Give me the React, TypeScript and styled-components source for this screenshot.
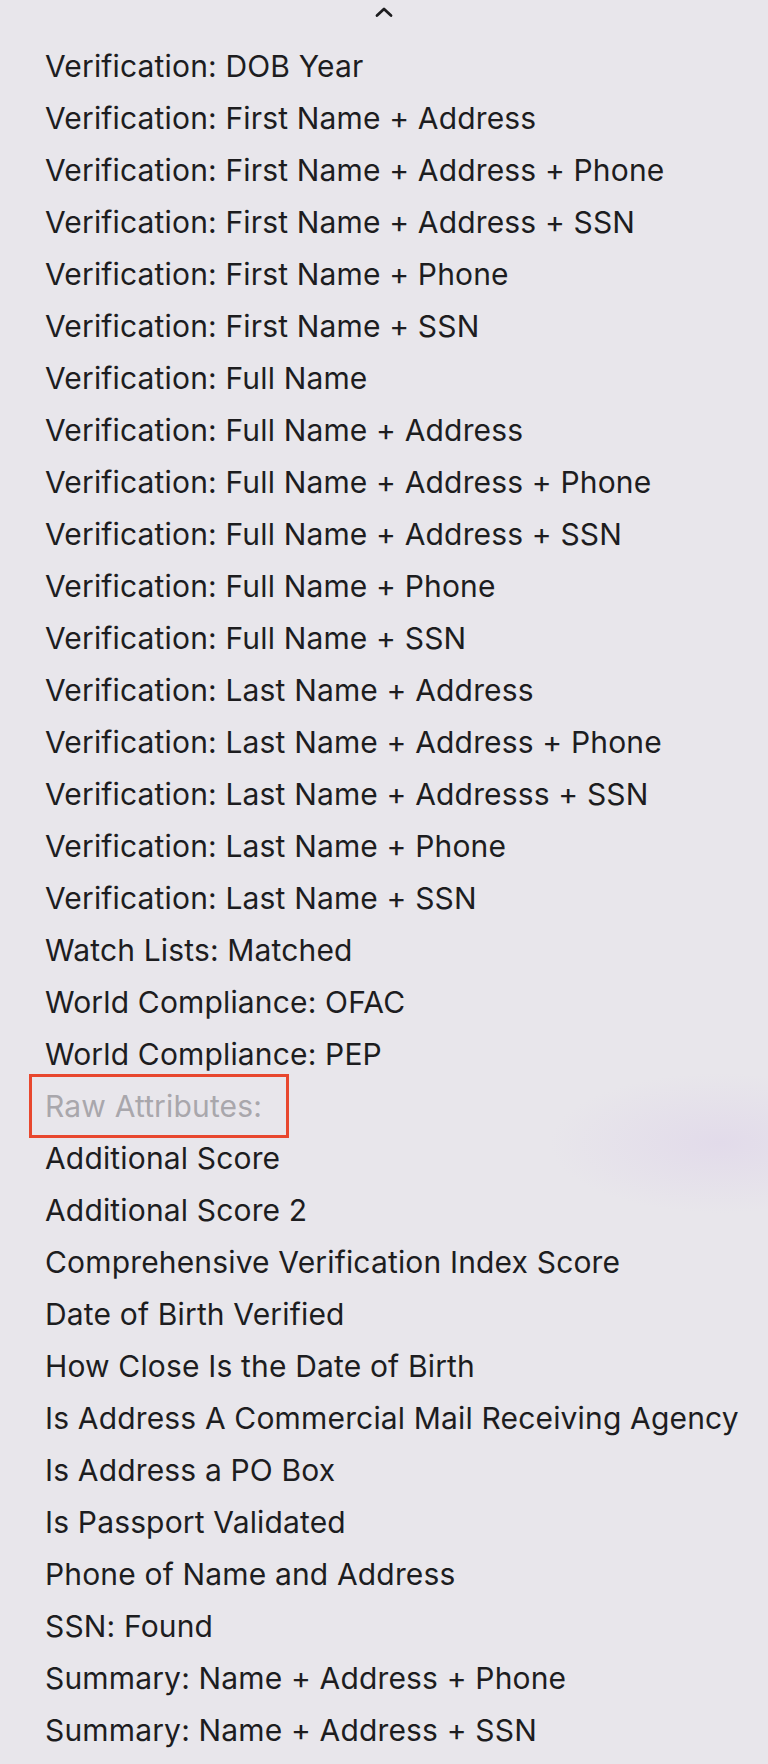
import styled, { createGlobalStyle } from "styled-components";

const rows: { label: string; muted?: boolean }[] = [
  { label: "Verification: DOB Year" },
  { label: "Verification: First Name + Address" },
  { label: "Verification: First Name + Address + Phone" },
  { label: "Verification: First Name + Address + SSN" },
  { label: "Verification: First Name + Phone" },
  { label: "Verification: First Name + SSN" },
  { label: "Verification: Full Name" },
  { label: "Verification: Full Name + Address" },
  { label: "Verification: Full Name + Address + Phone" },
  { label: "Verification: Full Name + Address + SSN" },
  { label: "Verification: Full Name + Phone" },
  { label: "Verification: Full Name + SSN" },
  { label: "Verification: Last Name + Address" },
  { label: "Verification: Last Name + Address + Phone" },
  { label: "Verification: Last Name + Addresss + SSN" },
  { label: "Verification: Last Name + Phone" },
  { label: "Verification: Last Name + SSN" },
  { label: "Watch Lists: Matched" },
  { label: "World Compliance: OFAC" },
  { label: "World Compliance: PEP" },
  { label: "Raw Attributes:", muted: true },
  { label: "Additional Score" },
  { label: "Additional Score 2" },
  { label: "Comprehensive Verification Index Score" },
  { label: "Date of Birth Verified" },
  { label: "How Close Is the Date of Birth" },
  { label: "Is Address A Commercial Mail Receiving Agency" },
  { label: "Is Address a PO Box" },
  { label: "Is Passport Validated" },
  { label: "Phone of Name and Address" },
  { label: "SSN: Found" },
  { label: "Summary: Name + Address + Phone" },
  { label: "Summary: Name + Address + SSN" },
];

const App: React.FC = () => {
  return (
    <>
      <GlobalStyle />
      <Page>
        <ScrollUp>
          <svg width="20" height="12" viewBox="0 0 20 12">
            <path
              d="M3 9.5 L10 3 L17 9.5"
              fill="none"
              stroke="#1d1d1f"
              strokeWidth="2.8"
              strokeLinecap="round"
              strokeLinejoin="round"
            />
          </svg>
        </ScrollUp>
        <List>
          {rows.map((row) => (
            <Item key={row.label} $muted={row.muted}>
              {row.label}
            </Item>
          ))}
        </List>
      </Page>
    </>
  );
};

const GlobalStyle = createGlobalStyle`
  html, body {
    margin: 0;
    padding: 0;
  }
  body {
    background: #e8e6eb;
    font-family: Inter, "Noto Sans", sans-serif;
  }
`;

const Page = styled.div`
  min-height: 1764px;
  background:
    radial-gradient(ellipse 170px 70px at 720px 1143px, #e2dbea 0%, rgba(226, 219, 234, 0) 100%),
    #e8e6eb;
`;

const ScrollUp = styled.div`
  height: 40px;
  display: flex;
  justify-content: center;
  align-items: flex-start;
  padding-top: 6px;
  box-sizing: border-box;
`;

const List = styled.ul`
  list-style: none;
  margin: 0;
  padding: 0 0 0 45px;
`;

const Item = styled.li<{ $muted?: boolean }>`
  position: relative;
  height: 52px;
  line-height: 52px;
  font-size: 30px;
  letter-spacing: 0.16px;
  color: ${({ $muted }) => ($muted ? "#a9a7ac" : "#1d1d1f")};
  white-space: nowrap;

  ${({ $muted }) =>
    $muted &&
    `
    &::after {
      content: "";
      position: absolute;
      left: -16px;
      top: -6px;
      width: 260px;
      height: 64px;
      box-sizing: border-box;
      border: 3px solid #e8472e;
    }
  `}
`;

export default App;
